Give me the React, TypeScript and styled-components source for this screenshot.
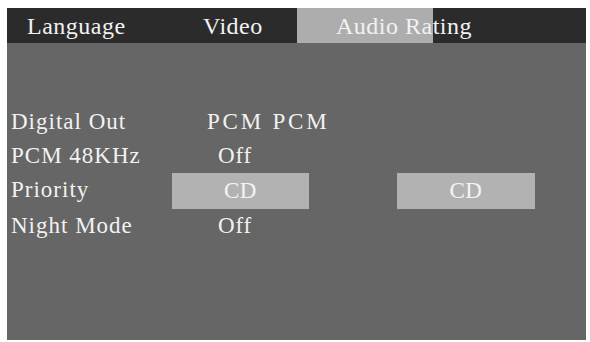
import React from "react";
import styled, { createGlobalStyle } from "styled-components";

const GlobalStyle = createGlobalStyle`
  html, body {
    margin: 0;
    padding: 0;
    background: #ffffff;
  }
  body {
    font-family: "Liberation Serif", "Times New Roman", serif;
  }
`;

const Screen = styled.div`
  margin: 8px 0 0 7px;
  width: 579px;
  height: 332px;
  background-color: #666666;
  display: flex;
  flex-direction: column;
`;

const TabBar = styled.div`
  display: flex;
  height: 35px;
  background-color: #2b2b2b;
`;

const Tab = styled.div<{ $width: number; $indent: number; $active?: boolean }>`
  width: ${(p) => p.$width}px;
  padding: 1px 0 0 ${(p) => p.$indent}px;
  box-sizing: border-box;
  background-color: ${(p) => (p.$active ? "#adadad" : "transparent")};
  color: #f2f2f2;
  font-size: 24px;
  letter-spacing: 0.5px;
  line-height: 34px;
  white-space: nowrap;
`;

const Menu = styled.div`
  display: grid;
  grid-template-columns: 161px 137px 88px 138px;
  grid-template-rows: 34px 34px 36px 34px;
  padding: 62px 0 0 4px;
`;

const Label = styled.div`
  grid-column: 1;
  color: #f2f2f2;
  font-size: 23px;
  letter-spacing: 1px;
  line-height: 34px;
  white-space: nowrap;
`;

const Value = styled.div<{ $indent: number; $spacing?: number }>`
  grid-column: 2 / span 3;
  padding-left: ${(p) => p.$indent}px;
  color: #f2f2f2;
  font-size: 23px;
  letter-spacing: ${(p) => p.$spacing ?? 0.8}px;
  line-height: 34px;
  white-space: nowrap;
`;

const Choice = styled.div<{ $col: number }>`
  grid-column: ${(p) => p.$col};
  height: 36px;
  background-color: #b2b2b2;
  color: #f4f4f4;
  font-size: 23px;
  letter-spacing: 0.5px;
  line-height: 36px;
  text-align: center;
`;

export default function App() {
  return (
    <>
      <GlobalStyle />
      <Screen>
        <TabBar>
          <Tab $width={176} $indent={20}>Language</Tab>
          <Tab $width={114} $indent={20}>Video</Tab>
          <Tab $width={136} $indent={39} $active>
            Audio Rating
          </Tab>
        </TabBar>
        <Menu>
          <Label>Digital Out</Label>
          <Value $indent={35} $spacing={2.8}>PCM PCM</Value>

          <Label>PCM 48KHz</Label>
          <Value $indent={46}>Off</Value>

          <Label>Priority</Label>
          <Choice $col={2}>CD</Choice>
          <Choice $col={4}>CD</Choice>

          <Label>Night Mode</Label>
          <Value $indent={46}>Off</Value>
        </Menu>
      </Screen>
    </>
  );
}
